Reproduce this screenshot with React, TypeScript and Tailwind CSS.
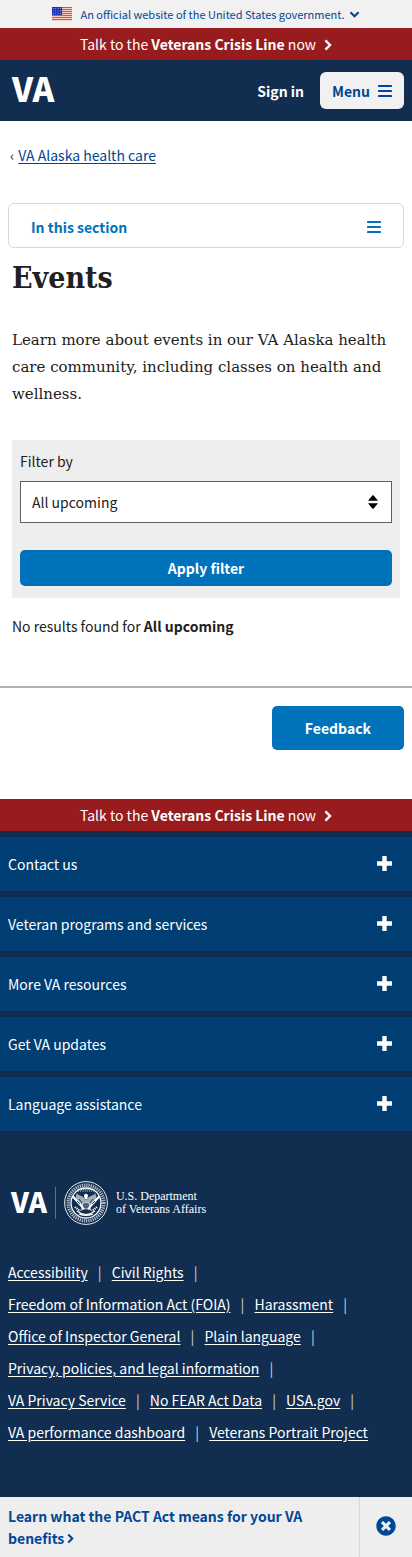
import React from "react";
import { FaTimesCircle } from "react-icons/fa";

const footerSections = [
  "Contact us",
  "Veteran programs and services",
  "More VA resources",
  "Get VA updates",
  "Language assistance",
];

const footerLinks = [
  "Accessibility",
  "Civil Rights",
  "Freedom of Information Act (FOIA)",
  "Harassment",
  "Office of Inspector General",
  "Plain language",
  "Privacy, policies, and legal information",
  "VA Privacy Service",
  "No FEAR Act Data",
  "USA.gov",
  "VA performance dashboard",
  "Veterans Portrait Project",
];

function Flag() {
  return (
    <svg viewBox="0 0 20 14" className="h-3.5 w-5" aria-hidden="true">
      <rect width="20" height="14" fill="#fff" />
      {[0, 2, 4, 6, 8, 10, 12].map((y) => (
        <rect key={y} y={y} width="20" height="1.3" fill="#e0562f" />
      ))}
      <rect width="10" height="8" fill="#1e33b1" />
      {[1.5, 4, 6.5].map((y) =>
        [1.5, 3.8, 6.1, 8.4].map((x) => (
          <circle key={`${x}-${y}`} cx={x} cy={y} r="0.4" fill="#fff" />
        )),
      )}
    </svg>
  );
}

function ChevronRight({ className }: { className: string }) {
  return (
    <svg
      viewBox="0 0 8 12"
      className={className}
      fill="none"
      stroke="currentColor"
      strokeWidth="2.4"
      aria-hidden="true"
    >
      <path d="M1.4 1.4 L6 6 L1.4 10.6" />
    </svg>
  );
}

function ChevronDown({ className }: { className: string }) {
  return (
    <svg
      viewBox="0 0 12 8"
      className={className}
      fill="none"
      stroke="currentColor"
      strokeWidth="2.4"
      aria-hidden="true"
    >
      <path d="M1.4 1.4 L6 6 L10.6 1.4" />
    </svg>
  );
}

function Bars() {
  return (
    <svg viewBox="0 0 14 12" className="h-3 w-3.5" fill="currentColor" aria-hidden="true">
      <rect width="14" height="2" rx="0.4" />
      <rect y="5" width="14" height="2" rx="0.4" />
      <rect y="10" width="14" height="2" rx="0.4" />
    </svg>
  );
}

function Seal() {
  return (
    <svg viewBox="-22 -22 44 44" className="size-11" fill="none" stroke="#fff" aria-hidden="true">
      <circle r="21.4" strokeWidth="0.9" />
      <circle r="17.8" strokeWidth="3.6" strokeDasharray="1.3 0.9" opacity="0.65" />
      <circle r="15" strokeWidth="1.3" />
      <path d="M-13.5 -7 L-2 6 M13.5 -7 L2 6" strokeWidth="2" />
      <path
        d="M0 -3 C-3 -8 -8 -7 -9 -10 C-12 -5 -9 2 -4 3 L-6 8 L0 6 L6 8 L4 3 C9 2 12 -5 9 -10 C8 -7 3 -8 0 -3Z"
        fill="#fff"
        opacity="0.6"
        stroke="none"
      />
      <path d="M-2 -7 C-2 -10 2 -10 2 -7 L1 -4 L-1 -4Z" fill="#fff" stroke="none" />
      <path d="M-3 0 H3 V4 Q0 8 -3 4Z" fill="#112e51" strokeWidth="0.6" />
      <path d="M-1 1 V5 M1 1 V5" strokeWidth="0.5" />
      <path d="M-11 4 L-6 8 M11 4 L6 8" strokeWidth="2.2" strokeDasharray="1.2 0.8" />
      <path d="M-9 8 Q0 15 9 8 M-7 11 Q0 14 7 11" strokeWidth="1.2" />
      <path d="M-8 -12 H8 M-5 -13.5 H5" strokeWidth="0.9" strokeDasharray="1 1.2" />
      <path d="M-7 -4 L-4 0 M7 -4 L4 0 M-9 -2 L-6 1 M9 -2 L6 1" stroke="#112e51" strokeWidth="0.9" />
    </svg>
  );
}

function CrisisLine() {
  return (
    <a
      href="#crisis"
      className="flex h-8 items-center justify-center gap-2 bg-[#981b1e] text-sm text-white"
    >
      <span>
        Talk to the <strong>Veterans Crisis Line</strong> now
      </span>
      <ChevronRight className="mt-0.5 h-3 w-2" />
    </a>
  );
}

export default function App() {
  return (
    <div className="bg-white font-['Noto_Sans_CJK_SC',sans-serif] text-sm leading-6 text-[#212121]">
      <header>
        <button
          type="button"
          className="flex h-7 w-full items-center justify-center bg-[#f1f1f1] text-[11px] text-[#004795]"
        >
          <Flag />
          <span className="ml-2">An official website of the United States government.</span>
          <ChevronDown className="ml-1 h-[7px] w-[11px]" />
        </button>
        <CrisisLine />
        <div className="flex h-[61px] items-center bg-[#112e51] pr-2 pl-3 font-bold text-white">
          <a href="#home" className="pb-1 text-[33px] leading-none font-black">
            VA
          </a>
          <button type="button" className="ml-auto">
            Sign in
          </button>
          <button
            type="button"
            className="ml-4 flex h-[37px] items-center gap-2 rounded-md bg-[#f1f1f1] px-3 text-[#004795]"
          >
            Menu
            <Bars />
          </button>
        </div>
      </header>

      <main>
        <nav aria-label="Breadcrumb" className="flex gap-1 px-2.5 pt-[22px]">
          <span aria-hidden="true">‹</span>
          <a href="#alaska" className="text-[#004795] underline underline-offset-2">
            VA Alaska health care
          </a>
        </nav>

        <div className="px-2 pt-9">
          <button
            type="button"
            className="flex h-[45px] w-full items-center justify-between rounded-md border border-[#d6d7d9] px-[22px] pt-0.5 font-bold text-[#0071bb]"
          >
            In this section
            <Bars />
          </button>
        </div>

        <div className="px-3">
          <h1 className="mt-3 font-['DejaVu_Serif_Condensed','DejaVu_Serif',serif] text-[30px] leading-9 font-bold">
            Events
          </h1>
          <p className="mt-[31px] font-['DejaVu_Serif',serif] text-[15px] leading-[27px]">
            Learn more about events in our VA Alaska health care community, including classes on
            health and wellness.
          </p>

          <form className="mt-8 bg-[#eeeeee] px-2 pt-[9px] pb-3" onSubmit={(e) => e.preventDefault()}>
            <label htmlFor="event-filter" className="block">
              Filter by
            </label>
            <div className="mt-2 grid items-center">
              <select
                id="event-filter"
                className="col-start-1 row-start-1 h-[42px] w-full appearance-none border border-[#5b616b] bg-white px-[11px]"
              >
                <option>All upcoming</option>
              </select>
              <svg
                viewBox="0 0 10 14"
                className="pointer-events-none col-start-1 row-start-1 mr-3.5 h-3.5 w-2.5 justify-self-end"
                aria-hidden="true"
              >
                <path d="M0 5.8 L4.3 0.5 Q5 0 5.7 0.5 L10 5.8Z M0 8.2 L4.3 13.5 Q5 14 5.7 13.5 L10 8.2Z" />
              </svg>
            </div>
            <button
              type="submit"
              className="mt-[27px] block h-9 w-full rounded-[5px] bg-[#0071bb] font-bold text-white"
            >
              Apply filter
            </button>
          </form>

          <p className="mt-4">
            No results found for <strong>All upcoming</strong>
          </p>
        </div>

        <div className="mt-12 flex justify-end border-t-2 border-[#aeb0b5] px-2 pt-[18px] pb-[49px]">
          <button
            type="button"
            className="h-11 rounded-[5px] bg-[#0071bb] px-[33px] font-bold text-white"
          >
            Feedback
          </button>
        </div>
      </main>

      <footer className="bg-[#112e51] text-white">
        <CrisisLine />
        <ul className="flex flex-col gap-1.5 pt-1.5">
          {footerSections.map((section) => (
            <li key={section}>
              <button
                type="button"
                className="flex h-[54px] w-full items-center justify-between bg-[#003e73] pr-5 pl-2"
              >
                {section}
                <svg viewBox="0 0 15 15" className="mb-0.5 size-[15px]" fill="#fff" aria-hidden="true">
                  <path d="M5.3 0H9.7V5.3H15V9.7H9.7V15H5.3V9.7H0V5.3H5.3Z" />
                </svg>
              </button>
            </li>
          ))}
        </ul>

        <a href="#va" className="mt-[50px] flex h-11 items-center pl-[11px]">
          <span className="pb-1 text-[28px] leading-none font-black">VA</span>
          <span className="ml-2 h-8 w-px bg-[#5b7391]" />
          <span className="ml-2">
            <Seal />
          </span>
          <span className="ml-2 font-['Liberation_Serif',serif] text-xs leading-[13px]">
            U.S. Department
            <br />
            of Veterans Affairs
          </span>
        </a>

        <ul className="flex flex-wrap px-2 pt-[31px] pb-[49px] leading-8">
          {footerLinks.map((link, i) => (
            <li key={link} className="flex">
              <a href="#footer" className="underline underline-offset-2">
                {link}
              </a>
              {i < footerLinks.length - 1 && (
                <span className="w-6 text-center text-[#d6d7d9]" aria-hidden="true">
                  |
                </span>
              )}
            </li>
          ))}
        </ul>
      </footer>

      <aside className="flex bg-[#eeeeee] text-[#004795]">
        <a href="#pact" className="flex-1 py-2 pr-10 pl-2 leading-[22px] font-bold">
          Learn what the PACT Act means for your VA benefits{" "}
          <ChevronRight className="inline h-[11px] w-[7px] align-baseline" />
        </a>
        <button
          type="button"
          aria-label="Close"
          className="flex w-[53px] items-center justify-center border-l border-[#d6d7d9]"
        >
          <FaTimesCircle className="mb-0.5 size-5" />
        </button>
      </aside>
    </div>
  );
}
